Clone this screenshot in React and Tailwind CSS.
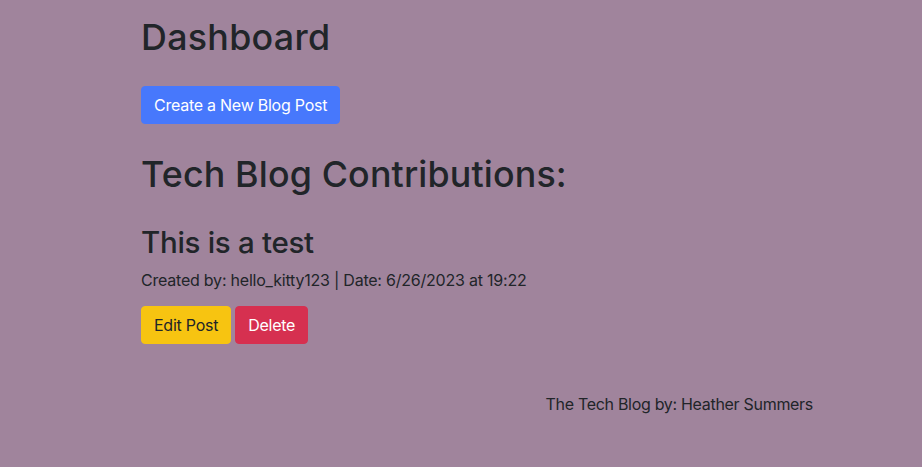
export default function App() {
  return (
    <div className="min-h-[467px] w-full bg-[#a0849c] text-[#212529]" style={{ fontFamily: 'Inter, "Noto Sans", sans-serif' }}>
      <main className="mx-auto w-[640px] pt-[16px]">
        <h1 className="mb-2 text-[35.8px] font-medium leading-[1.2] tracking-[0.3px]">Dashboard</h1>
        <div className="mt-[27px]">
          <button className="h-[38px] rounded-[4px] border border-[#4778fc] bg-[#4778fc] px-[12px] text-[16px] tracking-[-0.25px] text-white">Create a New Blog Post</button>
        </div>
        <h1 className="mt-[29px] text-[35.8px] font-medium leading-[1.2] tracking-[0.15px]">Tech Blog Contributions:</h1>
        <section className="mt-[29px]">
          <h2 className="mb-2 text-[29.5px] font-medium leading-[1.2] tracking-[-0.3px]">This is a test</h2>
          <p className="mb-[14px] text-[16px] leading-[1.5] tracking-[-0.22px]">Created by: hello_kitty123 | Date: 6/26/2023 at 19:22</p>
          <div className="flex gap-[4px]">
            <button className="h-[38px] rounded-[4px] border border-[#f7c411] bg-[#f7c411] px-[12px] text-[16px] tracking-[-0.25px] text-[#212529]">Edit Post</button>
            <button className="h-[38px] rounded-[4px] border border-[#d63050] bg-[#d63050] px-[12px] text-[16px] tracking-[-0.25px] text-white">Delete</button>
          </div>
        </section>
      </main>
      <footer className="flex justify-end pr-[109px] pt-[48px]">
        <p className="text-[16px] leading-[1.5] tracking-[-0.3px]">The Tech Blog by: Heather Summers</p>
      </footer>
    </div>
  );
}
